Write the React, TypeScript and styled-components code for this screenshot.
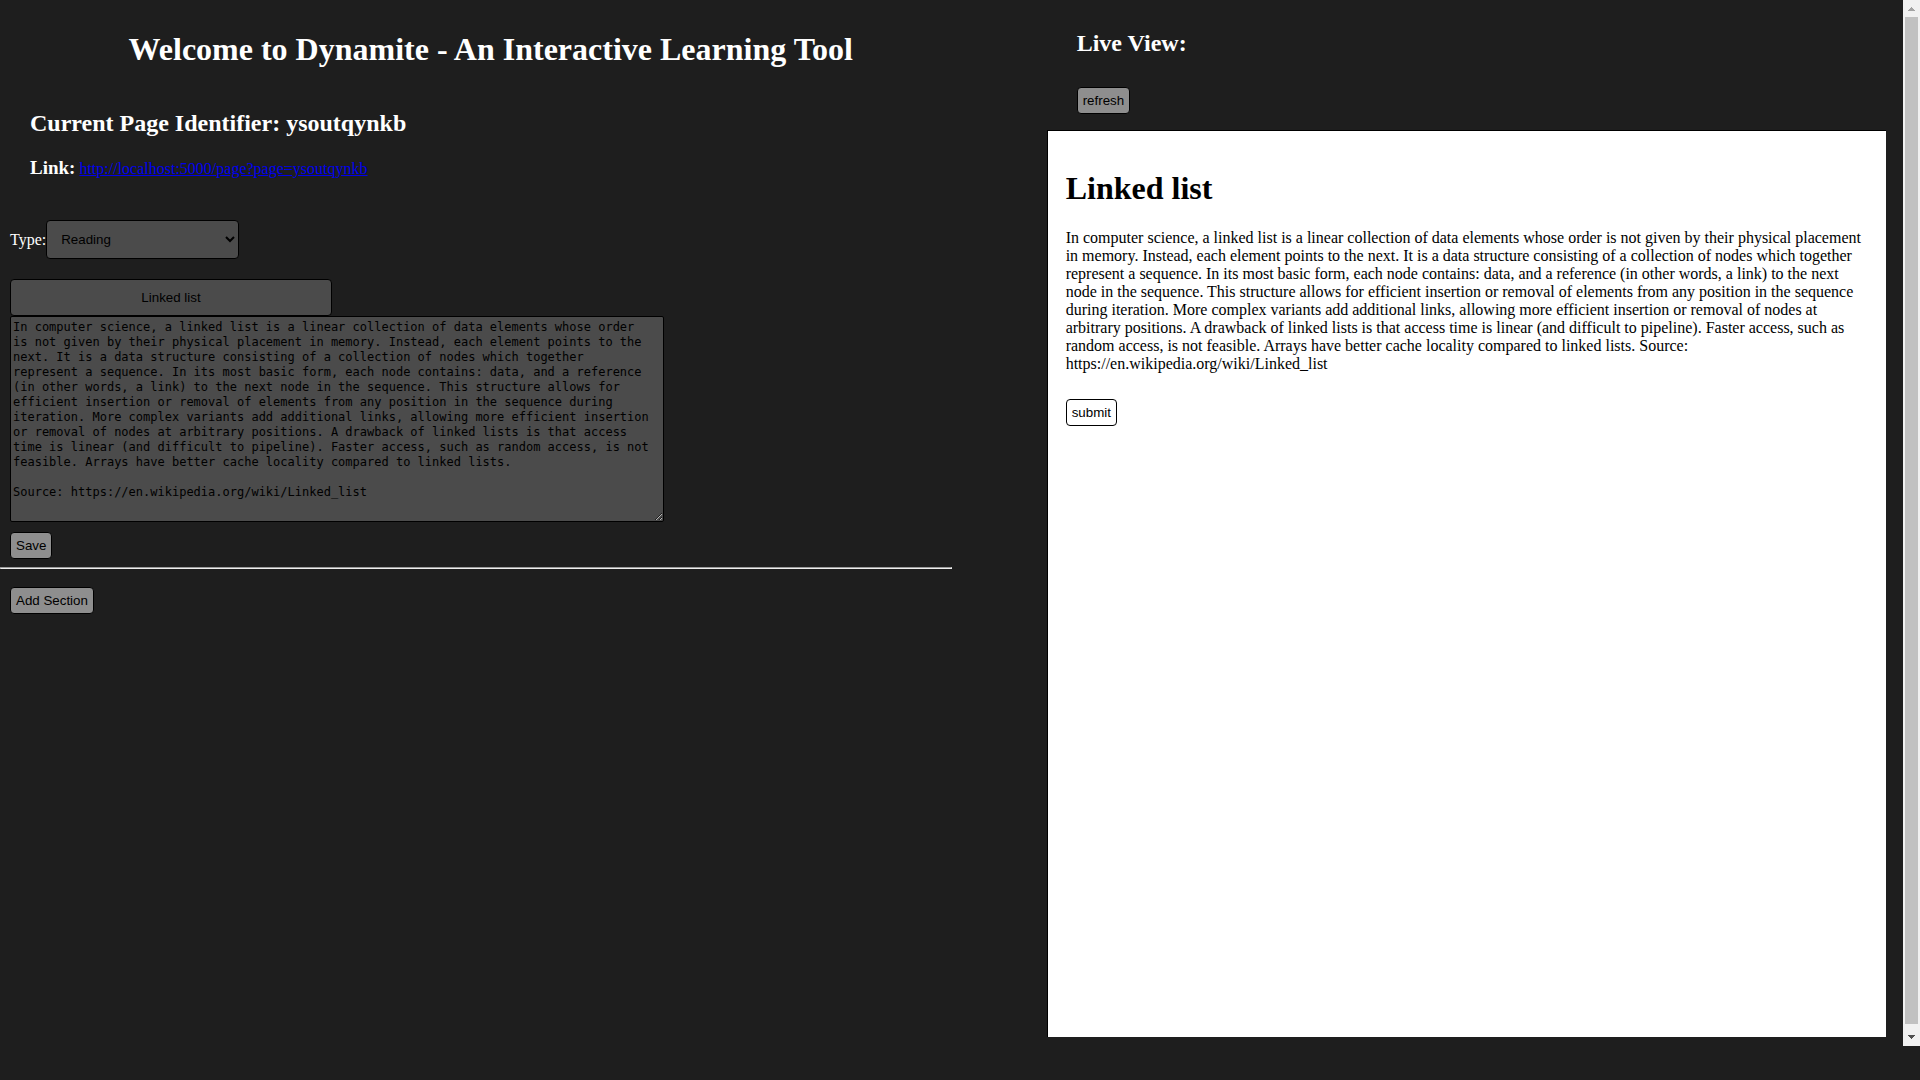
import React, { useState } from "react";
import styled, { createGlobalStyle } from "styled-components";

const serif = `"Liberation Serif", "Times New Roman", serif`;
const sans = `"Liberation Sans", Arial, sans-serif`;
const mono = `"DejaVu Sans Mono", Consolas, monospace`;

const GlobalStyle = createGlobalStyle`
  * { box-sizing: border-box; }
  body {
    margin: 0;
    background: #1e1e1e;
    color: #fff;
    font: 16px/18px ${serif};
  }
`;

const Page = styled.div`
  display: flex;
  align-items: flex-start;
  min-height: 100vh;
`;

const Columns = styled.div`
  flex: 1;
  min-width: 0;
  display: grid;
  grid-template-columns: 50% 45%;
  justify-content: space-between;
`;

const Editor = styled.main`
  min-width: 0;
`;

const Intro = styled.header`
  padding: 31px 0 0 30px;
`;

const Title = styled.h1`
  margin: 0;
  font-size: 32px;
  line-height: 36px;
  text-align: center;
`;

const Subtitle = styled.h2`
  margin: 0;
  font-size: 24px;
  line-height: 28px;
`;

const Identifier = styled(Subtitle)`
  margin-top: 42px;
`;

const LinkRow = styled.div`
  display: flex;
  align-items: baseline;
  gap: 4px;
  margin-top: 20px;
`;

const LinkLabel = styled.h3`
  margin: 0;
  font-size: 19px;
  line-height: 21px;
`;

const PageLink = styled.a`
  color: #0000ee;
  text-decoration: underline;
`;

const Section = styled.section`
  display: flex;
  flex-direction: column;
  align-items: flex-start;
  padding: 42px 10px 8px;
`;

const TypeRow = styled.div`
  display: flex;
  align-items: center;
  margin-bottom: 20px;
`;

const TypeSelect = styled.select`
  width: 193px;
  height: 39px;
  padding: 0 10px;
  border: 1px solid #000;
  border-radius: 4px;
  background: #4b4b4b;
  color: #000;
  font-family: ${sans};
`;

const HeadingInput = styled.input`
  width: 322px;
  height: 37px;
  padding: 0 10px;
  border: 1px solid #000;
  border-radius: 4px;
  background: #4b4b4b;
  color: #000;
  font-family: ${sans};
  text-align: center;
`;

const BodyText = styled.textarea`
  width: 654px;
  height: 206px;
  margin-bottom: 10px;
  padding: 3px 10px 2px 2px;
  border: 1px solid #000;
  border-radius: 2px;
  background: #4b4b4b;
  color: #000;
  font: 12px/15px ${mono};
  overflow: auto;
`;

const Button = styled.button<{ $plain?: boolean }>`
  height: 27px;
  padding: 0 5px;
  border: 1px solid #000;
  border-radius: 4px;
  background: ${(p) => (p.$plain ? "#fff" : "#8e8e8e")};
  color: #000;
  font-family: ${sans};
`;

const Divider = styled.hr`
  margin: 0;
  border: 1px inset #eee;
`;

const Actions = styled.div`
  padding: 18px 10px;
`;

const Live = styled.aside`
  display: flex;
  flex-direction: column;
  min-width: 0;
  height: calc(100vh - 43px);
  padding-right: 17px;
`;

const LiveHeader = styled.div`
  display: flex;
  flex-direction: column;
  align-items: flex-start;
  gap: 30px;
  padding: 29px 30px 16px;
`;

const Preview = styled.article`
  flex: 1;
  padding: 39px 18px;
  border: 1px solid #000;
  border-width: 1px 0 0 1px;
  background: #fff;
  color: #000;
`;

const PreviewTitle = styled.h1`
  margin: 0 0 23px;
  font-size: 32px;
  line-height: 36px;
`;

const PreviewText = styled.p`
  margin: 0 0 26px;
`;

const ScrollTrack = styled.div`
  display: flex;
  flex-direction: column;
  align-items: center;
  width: 17px;
  height: calc(100vh - 34px);
  background: #f1f1f1;
`;

const ScrollArrow = styled.svg`
  flex: none;
  width: 17px;
  height: 17px;
`;

const ScrollThumb = styled.div`
  flex: 1;
  width: 13px;
  margin-bottom: 5px;
  background: #c1c1c1;
`;

const article =
  "In computer science, a linked list is a linear collection of data elements whose order is not given by their physical placement in memory. Instead, each element points to the next. It is a data structure consisting of a collection of nodes which together represent a sequence. In its most basic form, each node contains: data, and a reference (in other words, a link) to the next node in the sequence. This structure allows for efficient insertion or removal of elements from any position in the sequence during iteration. More complex variants add additional links, allowing more efficient insertion or removal of nodes at arbitrary positions. A drawback of linked lists is that access time is linear (and difficult to pipeline). Faster access, such as random access, is not feasible. Arrays have better cache locality compared to linked lists.\n\nSource: https://en.wikipedia.org/wiki/Linked_list";

export default function App() {
  const [heading, setHeading] = useState("Linked list");
  const [body, setBody] = useState(article);

  return (
    <>
      <GlobalStyle />
      <Page>
        <Columns>
          <Editor>
            <Intro>
              <Title>Welcome to Dynamite - An Interactive Learning Tool</Title>
              <Identifier>Current Page Identifier: ysoutqynkb</Identifier>
              <LinkRow>
                <LinkLabel>Link:</LinkLabel>
                <PageLink href="http://localhost:5000/page?page=ysoutqynkb">
                  http://localhost:5000/page?page=ysoutqynkb
                </PageLink>
              </LinkRow>
            </Intro>
            <Section>
              <TypeRow>
                <label htmlFor="type">Type:</label>
                <TypeSelect id="type" defaultValue="Reading">
                  <option>Reading</option>
                </TypeSelect>
              </TypeRow>
              <HeadingInput
                aria-label="Section title"
                value={heading}
                onChange={(e) => setHeading(e.target.value)}
              />
              <BodyText
                aria-label="Section text"
                spellCheck={false}
                value={body}
                onChange={(e) => setBody(e.target.value)}
              />
              <Button type="button">Save</Button>
            </Section>
            <Divider />
            <Actions>
              <Button type="button">Add Section</Button>
            </Actions>
          </Editor>
          <Live>
            <LiveHeader>
              <Subtitle>Live View:</Subtitle>
              <Button type="button">refresh</Button>
            </LiveHeader>
            <Preview>
              <PreviewTitle>{heading}</PreviewTitle>
              <PreviewText>{body}</PreviewText>
              <Button type="button" $plain>
                submit
              </Button>
            </Preview>
          </Live>
        </Columns>
        <ScrollTrack aria-hidden="true">
          <ScrollArrow viewBox="0 0 17 17">
            <path d="M5 11h7v-1h-1v-1h-1v-1h-1v-1h-1v1h-1v1h-1v1h-1z" fill="#a3a3a3" />
          </ScrollArrow>
          <ScrollThumb />
          <ScrollArrow viewBox="0 0 17 17">
            <path d="M5 6h7v1h-1v1h-1v1h-1v1h-1v-1h-1v-1h-1v-1h-1z" fill="#505050" />
          </ScrollArrow>
        </ScrollTrack>
      </Page>
    </>
  );
}
